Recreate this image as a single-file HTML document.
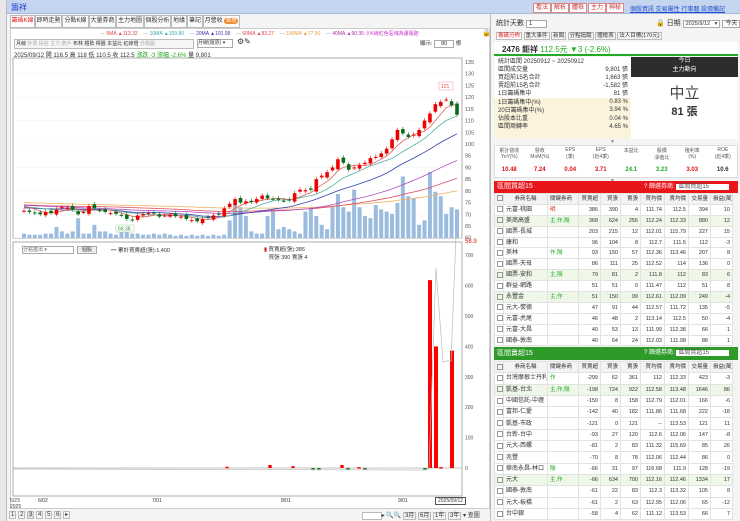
<!DOCTYPE html>
<html><head><meta charset="utf-8">
<style>
*{margin:0;padding:0;box-sizing:border-box}
body{width:740px;height:521px;overflow:hidden;background:#fff;font-family:"Liberation Sans","Noto Sans CJK TC",sans-serif;font-size:7px;color:#333;position:relative}
.a{position:absolute;white-space:nowrap}
.tab{position:absolute;top:15px;height:13px;border:1px solid #bbb;background:#fafafa;font-size:6px;line-height:11px;text-align:center;overflow:hidden}
.rb{position:absolute;top:3px;height:10px;border:1px solid #d88;background:#fff;color:#c33;font-size:6px;line-height:8px;padding:0 2px}
table{border-collapse:collapse;position:absolute;font-size:5.5px;table-layout:fixed}
td{border:1px solid #e2e2e2;height:10.9px;line-height:8px;padding:0 2px;text-align:right;white-space:nowrap;overflow:hidden}
td.n{text-align:left}
tr.g td{background:#eef7e8}
.cb{display:inline-block;width:6px;height:6px;border:1px solid #999;vertical-align:middle}
</style></head><body>
<div class="a" style="left:0;top:0;width:7px;height:521px;background:#e8e8e8;border-right:1px solid #bbb"></div>
<div class="a" style="left:7px;top:0;width:733px;height:14px;background:#c6d5ef;border-bottom:1px solid #a9bbdd"></div>
<div class="a" style="left:11px;top:2px;font-size:8px;color:#1a3fd0">籌祥</div>
<div class="rb" style="left:533px;">看法</div><div class="rb" style="left:551px;">解析</div><div class="rb" style="left:569px;">體檢</div><div class="rb" style="left:588px;">主力</div><div class="rb" style="left:606px;">神秘</div>
<div class="a" style="left:630px;top:4px;font-size:6px;color:#2250d0;text-decoration:underline">個股資訊 交易屬性 行事曆 設價備記</div>
<div class="a" style="left:7px;top:14px;width:483px;height:507px;background:#f4f4f4"></div>
<div class="tab" style="left:10px;width:25px;color:#d22;background:#fff">籌碼K線</div>
<div class="tab" style="left:35px;width:27px">即時走勢</div>
<div class="tab" style="left:62px;width:27px">分點K線</div>
<div class="tab" style="left:89px;width:27px">大量券商</div>
<div class="tab" style="left:116px;width:28px">主力地圖</div>
<div class="tab" style="left:144px;width:27px">個股分析</div>
<div class="tab" style="left:171px;width:16px">地緣</div>
<div class="tab" style="left:187px;width:16px">筆記</div>
<div class="tab" style="left:203px;width:37px">月營收 <span style="background:#f08a2c;color:#fff;border-radius:4px;padding:0 2px;font-size:5px">新增</span></div>
<div class="a" style="left:10px;top:28px;width:480px;height:481px;background:#fff;border:1px solid #ccc"></div>
<div class="a" style="left:100px;top:30px;font-size:5px">
<span style="color:#999">—</span> <span style="color:#d44">5MA ▲113.32</span>&nbsp;&nbsp;&nbsp;&nbsp;<span style="color:#999">—</span> <span style="color:#3aa">10MA ▲109.80</span>&nbsp;&nbsp;&nbsp;&nbsp;<span style="color:#999">—</span> <span style="color:#33a">20MA ▲101.99</span>&nbsp;&nbsp;&nbsp;&nbsp;<span style="color:#999">—</span> <span style="color:#d44">60MA ▲83.27</span>&nbsp;&nbsp;&nbsp;&nbsp;<span style="color:#999">—</span> <span style="color:#e9a13b">100MA ▲77.90</span>&nbsp;&nbsp;&nbsp;&nbsp;<span style="color:#999">—</span> <span style="color:#a3a">40MA ▲90.35</span> <span style="color:#c3c">⓪K線紅色區塊為畫驅距</span></div>
<div class="a" style="left:482px;top:29px;font-size:7px">🔒</div>
<div class="a" style="left:14px;top:39px;font-size:5px;border:1px solid #bbb;background:#f6f6f6;padding:0 1px;line-height:8px;width:180px;overflow:hidden">月線 <span style="color:#aaa">外資 投信 主力 散戶</span> 布林 趨勢 標籤 本益比 紅綠燈 <span style="color:#aaa">分價圖</span></div>
<div class="a" style="left:197px;top:39px;width:36px;height:9px;border:1px solid #aaa;background:#fff;font-size:5px;line-height:7px">月線(還原) ▾</div>
<div class="a" style="left:237px;top:37px;font-size:8px">⚙✎</div>
<div class="a" style="left:420px;top:39px;font-size:5.5px">顯示: <span style="border:1px solid #aaa;padding:0 6px">80</span> 根</div>
<div class="a" style="left:14px;top:50px;font-size:6px">2025/09/12 開 116.5 高 118 低 110.5 收 112.5 <span style="color:#2a2">漲跌 -3 漲幅 -2.6%</span> 量 9,801</div>
<svg class="a" style="left:10px;top:28px" width="480" height="493" id="sv"></svg>
<div class="a" style="left:22px;top:246px;width:52px;height:8px;border:1px solid #aaa;background:#fff;font-size:5px;line-height:6px;color:#666">分點進出 ▾</div>
<div class="a" style="left:77px;top:246px;width:20px;height:8px;border:1px solid #aaa;background:#eee;font-size:5px;line-height:6px;text-align:center">個股</div>
<div class="a" style="left:111px;top:246px;font-size:5.5px">━ 累計買賣超(張):1,400</div>
<div class="a" style="left:264px;top:245px;font-size:5.5px"><span style="color:#d11">▮</span> 買賣超(張):386<br>&nbsp;&nbsp;&nbsp;買張 390 賣張 4</div>
<div class="a" style="left:10px;top:498px;font-size:5px;color:#444">5/23<br>2025</div>
<div class="a" style="left:38px;top:498px;font-size:5px">6/02</div>
<div class="a" style="left:152px;top:498px;font-size:5px">7/01</div>
<div class="a" style="left:281px;top:498px;font-size:5px">8/01</div>
<div class="a" style="left:398px;top:498px;font-size:5px">9/01</div>
<div class="a" style="left:435px;top:497px;font-size:5px;border:1px solid #555;padding:0 2px;background:#fff">2025/09/12</div>
<div class="a" style="left:9px;top:511px;font-size:6px">
<span style="border:1px solid #bbb;padding:0 1px">1</span> <span style="border:1px solid #bbb;padding:0 1px">2</span> <span style="border:1px solid #bbb;padding:0 1px;background:#ddd">3</span> <span style="border:1px solid #bbb;padding:0 1px">4</span> <span style="border:1px solid #bbb;padding:0 1px">5</span> <span style="border:1px solid #bbb;padding:0 1px">6</span> <span style="border:1px solid #bbb;padding:0 1px">▸</span></div>
<div class="a" style="left:362px;top:510px;font-size:6px"><span style="border:1px solid #bbb;padding:0 8px;background:#fff">&nbsp;</span>▸ 🔍🔍 <span style="border:1px solid #bbb;padding:0 1px">3月</span> <span style="border:1px solid #bbb;padding:0 1px">6月</span> <span style="border:1px solid #bbb;padding:0 1px">1年</span> <span style="border:1px solid #bbb;padding:0 1px">3年</span> ▾ 查圖</div>

<div class="a" style="left:490px;top:14px;width:250px;height:507px;background:#f4f4f4;border-left:1px solid #bbb"></div>
<div class="a" style="left:496px;top:18px;font-size:7px">統計天數 <span style="border:1px solid #aaa;background:#fff;padding:0 14px 0 2px;font-size:6px">1</span></div>
<div class="a" style="left:656px;top:18px;font-size:7px">🔒 日期 <span style="border:1px solid #aaa;background:#fff;padding:0 2px;font-size:5.5px">2025/9/12 &nbsp; ▾</span> <span style="border:1px solid #aaa;background:#fff;padding:0 2px;font-size:6px">今天</span></div>
<div class="a" style="left:496px;top:31px;font-size:5.5px"><span style="color:#d22;border:1px solid #bbb;background:#fff;padding:0 1px">籌碼分佈</span> <span style="border:1px solid #bbb;padding:0 1px">重大事件</span> <span style="border:1px solid #bbb;padding:0 1px">新聞</span> <span style="border:1px solid #bbb;padding:0 1px">分點追蹤</span> <span style="border:1px solid #bbb;padding:0 1px">體檢表</span> <span style="border:1px solid #bbb;padding:0 1px">法人目標(170元)</span></div>
<div class="a" style="left:494px;top:42px;width:244px;height:14px;background:#fff;border-bottom:2px solid #2a2"></div>
<div class="a" style="left:502px;top:44px;font-size:8px;font-weight:bold">2476 鉅祥 <span style="color:#2a2;font-weight:normal">112.5元 ▼3 (-2.6%)</span></div>
<div class="a" style="left:494px;top:57px;width:137px;height:82px;background:#fff"></div>
<div class="a" style="left:498px;top:58px;font-size:6px;line-height:8.1px">統計區間 20250912 ~ 20250912<br>區間成交量<br>買超前15名合計<br>賣超前15名合計<br>1日籌碼集中</div>
<div class="a" style="left:494px;top:98px;width:137px;height:41px;background:#fbf3dc"></div>
<div class="a" style="left:498px;top:99px;font-size:6px;line-height:8.1px">1日籌碼集中(%)<br>20日籌碼集中(%)<br>佔股本比重<br>區間周轉率</div>
<div class="a" style="left:560px;top:66px;width:68px;text-align:right;font-size:6px;line-height:8.1px">9,801 張<br>1,663 張<br>-1,582 張<br>81 張<br>0.83 %<br>3.94 %<br>0.04 %<br>4.65 %</div>
<div class="a" style="left:631px;top:57px;width:107px;height:20px;background:#2d2d2d;color:#fff;font-size:6px;text-align:center;line-height:9px">今日<br>主力動向</div>
<div class="a" style="left:631px;top:77px;width:107px;height:62px;background:#fff;text-align:center"><div style="font-size:15px;color:#444;margin-top:5px">中立</div><div style="font-size:11px;font-weight:bold">81 張</div></div>
<div class="a" style="left:610px;top:139px;font-size:5px;color:#888">▼</div>
<div class="a" style="left:494px;top:145px;width:244px;height:33px;background:#fff;border:1px solid #ddd"></div>
<div class="a" style="left:494px;top:147px;width:244px;font-size:5px;color:#555;display:flex;text-align:center">
<div style="flex:1">累計營收<br>YoY(%)</div><div style="flex:1">營收<br>MoM(%)</div><div style="flex:1">EPS<br>(季)</div><div style="flex:1">EPS<br>(近4季)</div><div style="flex:1">本益比</div><div style="flex:1">股價<br>淨值比</div><div style="flex:1">殖利率<br>(%)</div><div style="flex:1">ROE<br>(近4季)</div></div>
<div class="a" style="left:494px;top:167px;width:244px;font-size:6px;font-weight:bold;display:flex;text-align:center">
<div style="flex:1;color:#d11">10.48</div><div style="flex:1;color:#d11">7.24</div><div style="flex:1;color:#d11">0.04</div><div style="flex:1;color:#d11">3.71</div><div style="flex:1;color:#2a2">24.1</div><div style="flex:1;color:#2a2">3.23</div><div style="flex:1;color:#d11">3.03</div><div style="flex:1">10.6</div></div>
<div class="a" style="left:610px;top:178px;font-size:5px;color:#888">▼</div>
<div class="a" style="left:494px;top:181px;width:244px;height:12px;background:#e8161b;color:#fff;font-size:7px;padding-left:3px;line-height:12px">區間買超15<span style="position:absolute;left:150px;font-size:6px">? 篩選券商: <span style="background:#fff;color:#555;padding:0 20px 0 2px">區間買超15</span></span></div>
<div class="a" style="left:494px;top:347px;width:244px;height:13px;background:#2e9a2a;color:#fff;font-size:7px;padding-left:3px;line-height:13px">區間賣超15<span style="position:absolute;left:150px;font-size:6px">? 篩選券商: <span style="background:#fff;color:#555;padding:0 20px 0 2px">區間賣超15</span></span></div>
<div id="t1"></div><div id="t2"></div>

<script>
const sv=document.getElementById('sv');
let h='';
h+='<rect x="3" y="30" width="449" height="180" fill="#fff" stroke="#999" stroke-width="0.8"/>';
h+='<rect x="3" y="214" width="449" height="254" fill="#fff" stroke="#999" stroke-width="0.8"/>';
const py=p=>34+(135-p)*2.343;
for(let p=135;p>=60;p-=5){h+=`<text x="455" y="${py(p)+2}" font-size="5.5" fill="#555">${p}</text>`; if(p%10==0)h+=`<line x1="3" x2="452" y1="${py(p)}" y2="${py(p)}" stroke="#f0f0f0" stroke-width="0.5"/>`;}
h+=`<text x="455" y="215" font-size="6" fill="#d11">58.9</text>`;
const ly=v=>440-v*0.304;
for(let v=0;v<=700;v+=100)h+=`<text x="455" y="${ly(v)+2}" font-size="5" fill="#555">${v}</text>`;
const C=[71.5,71,70.5,70,71,70.5,72,73,72.8,72,70,71,73.5,72.5,71.5,71,70.5,70.2,69.5,68,67.5,69.5,70.2,70.5,70.3,69,69.5,69.8,69.2,69,68,67.5,67,68,68.5,69.5,70,72.5,74.5,76.5,75,75.5,75.2,76.5,78,76.8,76.5,76.2,75.8,76,79,80.5,80.3,80.5,85,86.5,88,90,93.5,92,89,90,91,92,94,94.5,96,98,102,106,104.5,103,104,106,110,113,117,118,119,116.5,112.5];
const V=[2,1.5,1.5,1.5,2,2,5,3,2,3,9,2,2,6,3,3,2,1.5,3,3,2,2,1.5,1.5,2,1.5,2,1.5,1,1.5,1,1.5,1,1.5,1,1.5,1,1.5,8,15,14,10,3,2,2,10,12,4,5,4,3,2,12,14,10,6,4,14,20,14,12,22,14,10,9,15,13,12,11,16,28,19,18,6,8,30,21,19,11,14,13];
const n=C.length,x0=14,dx=(447-x0)/(n-1);
const vy=210;
C.forEach((c,i)=>{const x=x0+i*dx;h+=`<rect x="${x-2}" y="${vy-V[i]*2.2}" width="4" height="${V[i]*2.2}" fill="#9bbcdf"/>`;});
const pre=[];for(let i=0;i<100;i++)pre.push(77-i*0.04+Math.sin(i/5)*1.5);
const all=pre.concat(C);
function ma(k,col){let pts=[];for(let i=0;i<n;i++){let s=0;for(let j=0;j<k;j++)s+=all[100+i-j];pts.push((x0+i*dx).toFixed(1)+','+py(s/k).toFixed(1));}h+=`<polyline points="${pts.join(' ')}" fill="none" stroke="${col}" stroke-width="0.8"/>`;}
ma(100,'#f0b060');ma(60,'#e05060');ma(40,'#b050c0');ma(20,'#3040b0');ma(10,'#50b0a0');ma(5,'#e06060');
C.forEach((c,i)=>{const o=i?C[i-1]+(Math.sin(i*3)*0.8):c;const x=x0+i*dx;const up=c>=o;const col=up?'#e00':'#0a6a1a';const hi=Math.max(o,c)+1,lo=Math.min(o,c)-0.8;
h+=`<line x1="${x}" x2="${x}" y1="${py(hi)}" y2="${py(lo)}" stroke="${col}" stroke-width="0.6"/>`;
const t=py(Math.max(o,c)),b=py(Math.min(o,c));h+=`<rect x="${x-1.8}" y="${t}" width="3.6" height="${Math.max(1,b-t)}" fill="${col}"/>`;});
h+=`<rect x="429" y="54" width="14" height="8" fill="#fff" stroke="#e9a" stroke-width="0.5"/><text x="431" y="60" font-size="5" fill="#e44">121</text>`;
h+=`<rect x="106" y="197" width="18" height="7" fill="#fff" stroke="#9c9" stroke-width="0.5"/><text x="108" y="202.5" font-size="5" fill="#393">66.38</text>`;
h+=`<line x1="3" x2="452" y1="${ly(0)}" y2="${ly(0)}" stroke="#888" stroke-width="0.6"/>`;
const L=[[227,4],[270,10],[293,6],[313,-7],[319,-7],[342,10],[348,-3],[359,3],[365,-4],[425,-2],[430,618],[436,400],[441,3],[452,386]];
L.forEach(([x,v])=>{const col=v>0?'#f00':'#1a7a2a';const w=v>100?4:3.4;h+=`<rect x="${x-10-w/2}" y="${v>0?ly(v):ly(0)}" width="${w}" height="${Math.max(1.5,Math.abs(v)*0.304)}" fill="${col}"/>`;});
h+=`<polyline points="3,441 415,442 419,441 426,240 433,334 437,333 441,333 446,208" fill="none" stroke="#bbb" stroke-width="0.7"/>`;
sv.innerHTML=h;

const W=[9,44,31,22,20,20,24,24,22,22];
function tbl(top,rows,id,rh){let s=`<table style="left:494px;top:${top}px;width:238px;background:#fff"><colgroup>${W.map(w=>`<col style="width:${w}px">`).join('')}</colgroup><tr style="background:#f3f3f3"><td class="n" style="height:${rh}px"><span class="cb"></span></td><td class="n" style="text-align:center">券商名稱</td><td class="n">關鍵券商</td><td>買賣超</td><td>買張</td><td>賣張</td><td>買均價</td><td>賣均價</td><td>交易量</td><td>損益(萬)</td></tr>`;
rows.forEach(r=>{const g=r[1]&&r[1].indexOf('主')>=0;s+=`<tr${g?' class="g"':''}><td class="n" style="height:${rh}px"><span class="cb"></span></td><td class="n" style="font-size:6px">${r[0]}</td><td class="n" style="color:${r[1]=='明'?'#d22':'#2a2'}">${r[1]}</td>`+r.slice(2).map(x=>`<td>${x}</td>`).join('')+'</tr>';});
document.getElementById(id).innerHTML=s+'</table>';}
tbl(193,[['元富-桃園','明',386,390,4,111.74,112.5,394,10],['美商高盛','主,作,隔',368,624,256,112.24,112.33,880,12],['國票-長城','',203,215,12,112.01,115.79,227,15],['康和','',96,104,8,112.7,111.5,112,-3],['美林','作,隔',93,150,57,112.36,113.46,207,8],['國票-天母','',86,111,25,112.52,114,136,0],['國票-安和','主,隔',79,81,2,111.8,112,83,6],['群益-網路','',51,51,0,111.47,112,51,8],['永豐金','主,作',51,150,99,112.61,112.09,249,-4],['元大-懷德','',47,91,44,112.57,111.72,135,-5],['元富-虎尾','',46,48,2,113.14,112.5,50,-4],['元富-大昌','',40,53,13,111.99,112.38,66,1],['國泰-敦南','',40,64,24,112.03,111.98,88,1]],'t1',10.8);
tbl(361,[['台灣摩根士丹利','作',-299,62,361,112,112.33,423,-3],['凱基-台北','主,作,隔',-198,724,922,112.58,113.48,1646,86],['中國信託-中壢','',-150,8,158,112.79,112.01,166,-6],['富邦-仁愛','',-142,40,182,111.86,111.68,222,-18],['凱基-市政','',-121,0,121,'--',113.53,121,11],['台新-台中','',-93,27,120,112.6,112.06,147,-8],['元大-西螺','',-81,2,83,111.32,115.69,85,26],['兆豐','',-70,8,78,112.06,112.44,86,0],['華南永昌-林口','隔',-66,31,97,116.68,111.9,128,-19],['元大','主,作',-66,634,700,112.16,112.46,1334,17],['國泰-敦南','',-61,22,83,112.3,113.32,105,8],['元大-板橋','',-61,2,63,112.95,112.06,65,-12],['台中銀','',-58,4,62,111.12,113.53,66,7]],'t2',11.3);
</script>
</body></html>
